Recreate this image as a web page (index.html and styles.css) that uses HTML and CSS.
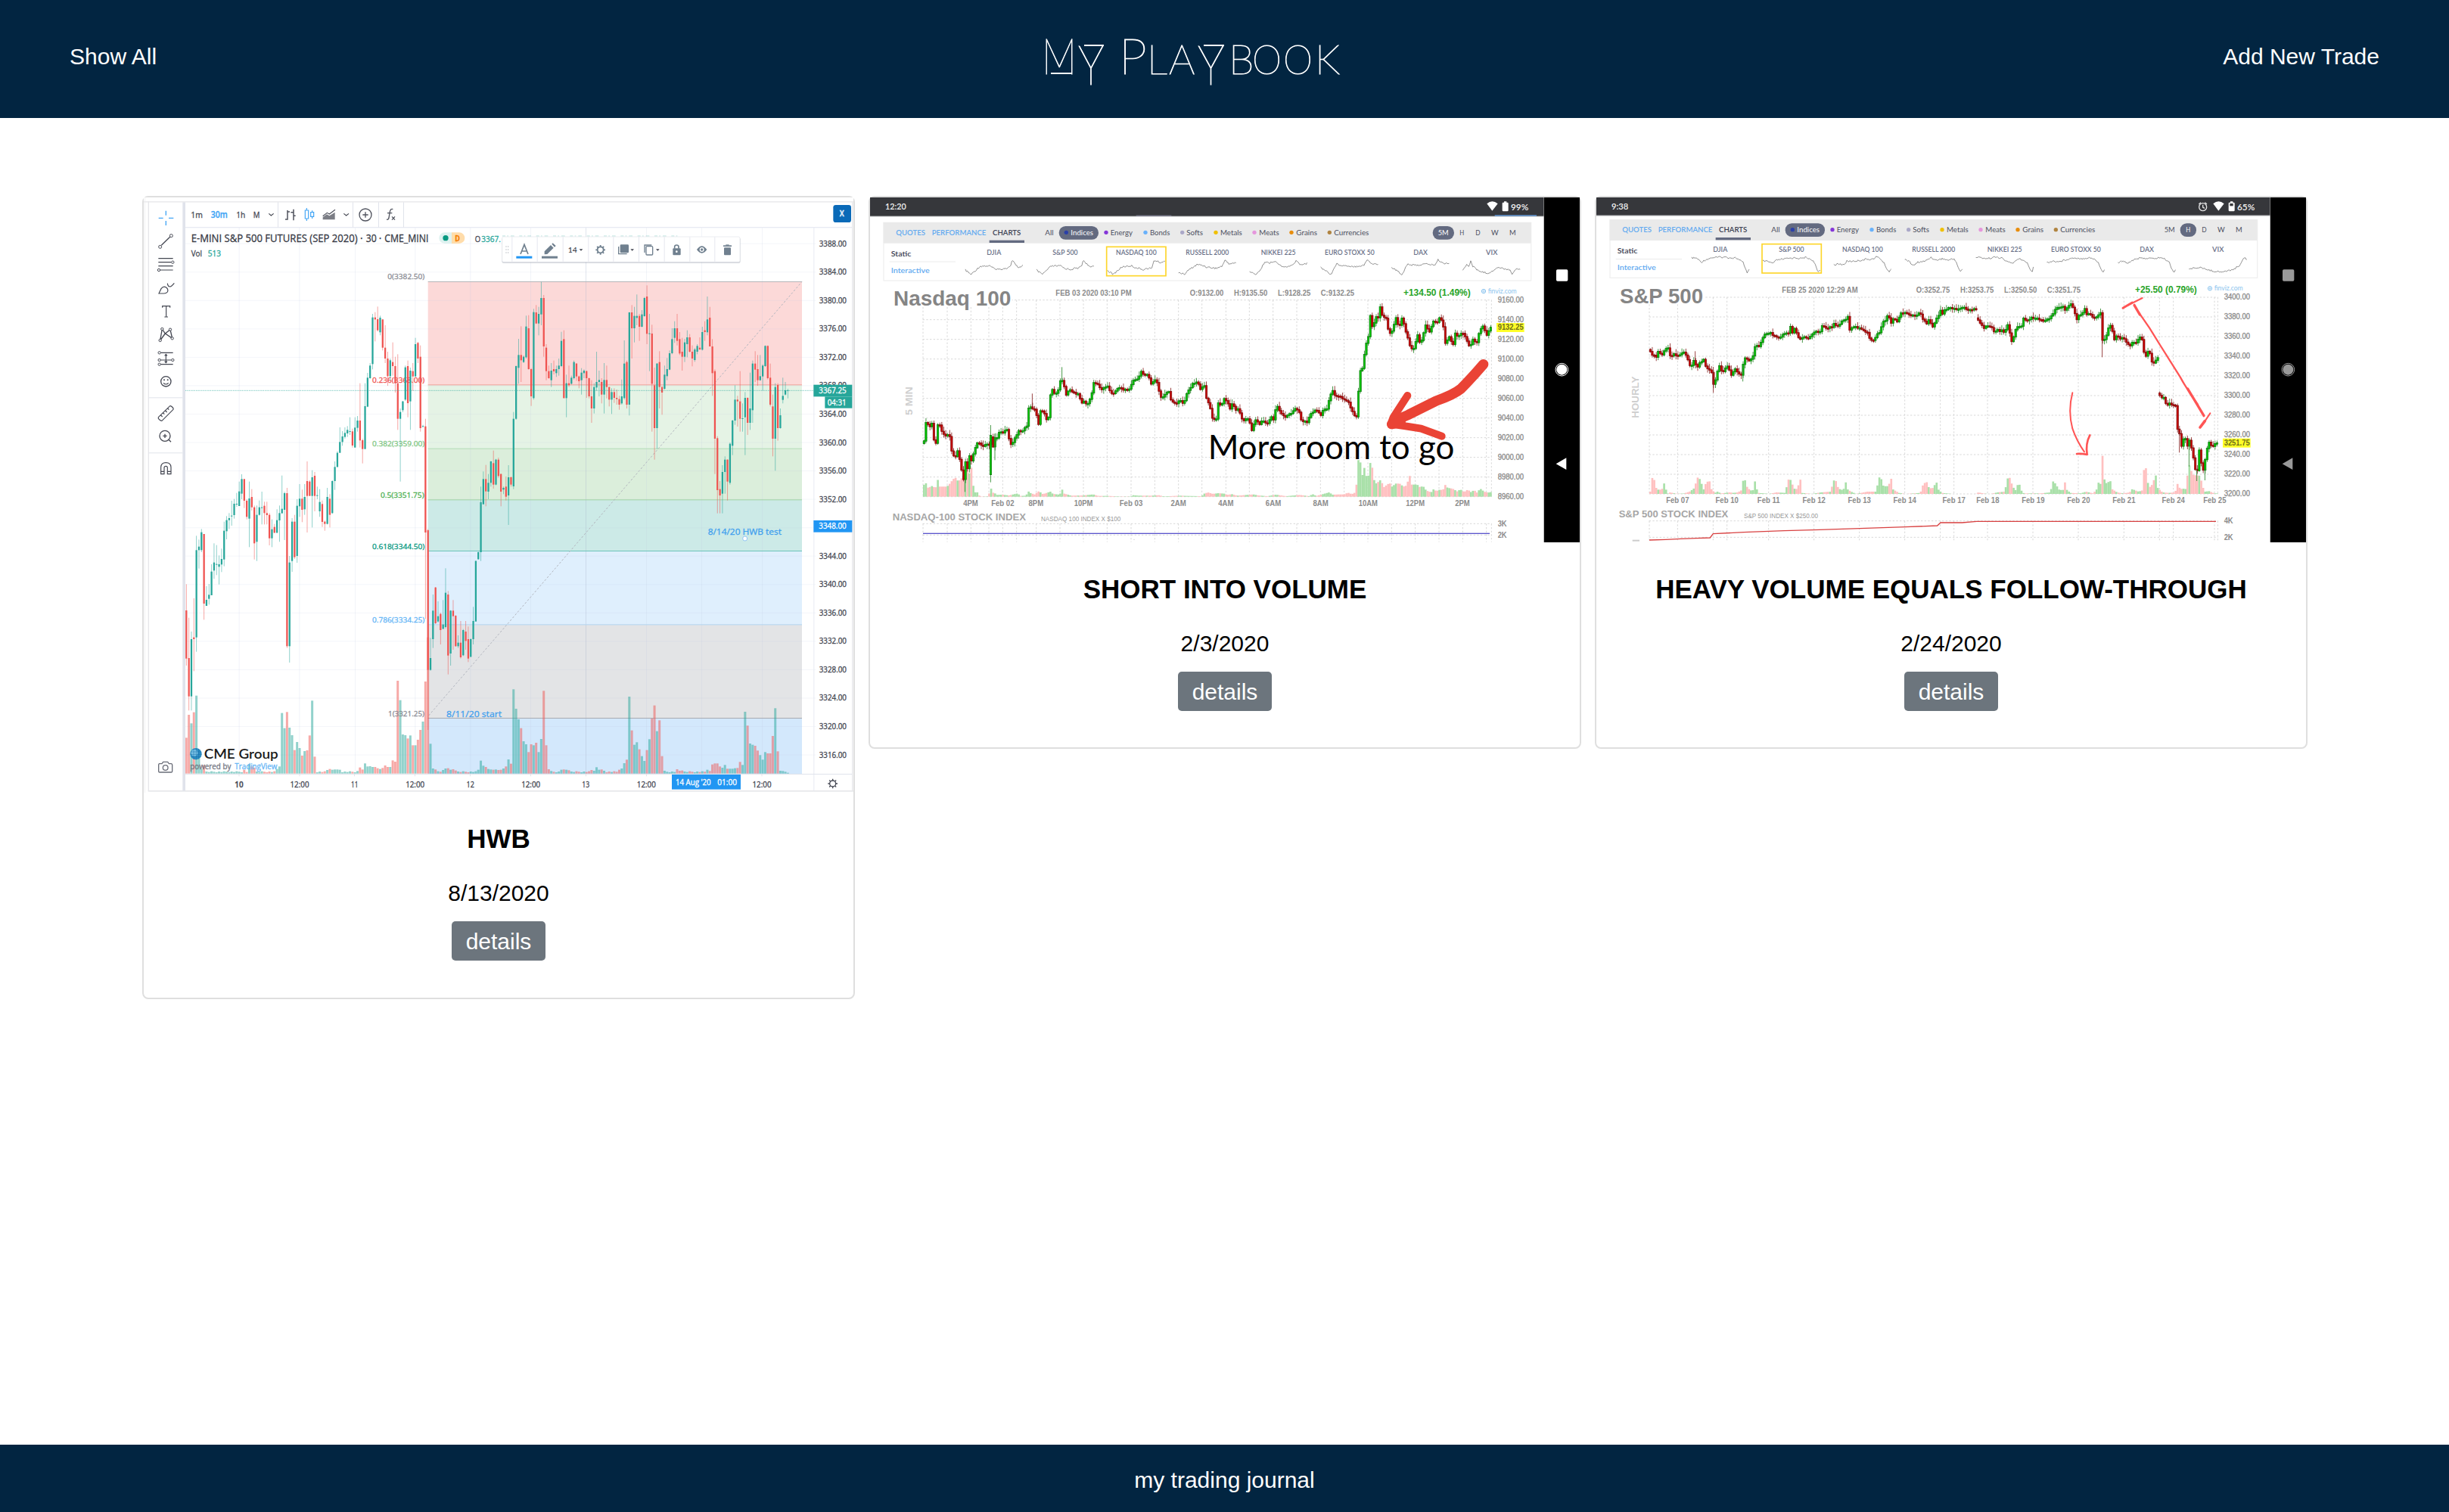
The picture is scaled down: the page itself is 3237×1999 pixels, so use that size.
FILE: index.html
```html
<!DOCTYPE html>
<html lang="en">
<head>
<meta charset="utf-8">
<title>My Playbook</title>
<link rel="stylesheet" href="styles.css">
</head>
<body>
<header class="navbar">
  <a class="nav-link">Show All</a>
  <svg class="logo" viewBox="0 0 396 80" role="img" aria-label="My Playbook">
    <g class="logo-text">
      <text y="62" font-size="66" x="2" textLength="46" lengthAdjust="spacingAndGlyphs">M</text>
      <text y="76" font-size="73" x="50" textLength="34" lengthAdjust="spacingAndGlyphs">Y</text>
      <text y="62" font-size="66" x="104">P</text>
      <text y="62" font-size="54" x="141 170">LA</text>
      <text y="76" font-size="73" x="208" textLength="35" lengthAdjust="spacingAndGlyphs">Y</text>
      <text y="62" font-size="54" x="249">B</text>
      <text y="62" font-size="54" x="280" textLength="39" lengthAdjust="spacingAndGlyphs">O</text>
      <text y="62" font-size="54" x="321" textLength="39" lengthAdjust="spacingAndGlyphs">O</text>
      <text y="62" font-size="54" x="363">K</text>
    </g>
    <path class="logo-rule" d="M14 61H41M58 24H84M216 24H243"/>
  </svg>
  <a class="nav-link">Add New Trade</a>
</header>
<main class="cards">
  <article class="card card-tall">
    <svg class="shot" id="hwb" viewBox="30 33 2814 2361"></svg>
    <div class="card-body">
      <h5 class="card-title">HWB</h5>
      <p class="card-date">8/13/2020</p>
      <a class="btn">details</a>
    </div>
  </article>
  <article class="card card-wide">
    <svg class="shot" id="nasdaq" viewBox="15 33 2814 1368"></svg>
    <div class="card-body">
      <h5 class="card-title">SHORT INTO VOLUME</h5>
      <p class="card-date">2/3/2020</p>
      <a class="btn">details</a>
    </div>
  </article>
  <article class="card card-wide">
    <svg class="shot" id="sp500" viewBox="15 33 2814 1368"></svg>
    <div class="card-body">
      <h5 class="card-title">HEAVY VOLUME EQUALS FOLLOW-THROUGH</h5>
      <p class="card-date">2/24/2020</p>
      <a class="btn">details</a>
    </div>
  </article>
</main>
<footer class="footer">my trading journal</footer>
<script src="charts.js"></script>
</body>
</html>
```
FILE: styles.css
```css
* { box-sizing: border-box; }
body {
  margin: 0;
  min-height: 100vh;
  display: flex;
  flex-direction: column;
  background: #fff;
  color: #000;
  font-family: "Liberation Sans", Arial, sans-serif;
  font-size: 30px;
  line-height: 45px;
}
.navbar {
  height: 156px;
  padding: 0 92px;
  display: flex;
  align-items: center;
  justify-content: space-between;
  background: #022541;
  color: #fff;
}
.nav-link { padding-bottom: 7px; }
.logo { width: 396px; height: 80px; margin-bottom: 4px; overflow: visible; }
.logo-text { font-family: Lato, sans-serif; font-weight: 100; fill: #fff; stroke: #fff; stroke-width: 1; }
.logo-rule { fill: none; stroke: #fff; stroke-width: 2; }
.cards {
  flex: 1;
  padding: 103px 187px 0 188px;
  display: flex;
  align-items: flex-start;
  gap: 18px;
}
.card {
  width: 942px;
  border: 2px solid #dfdfdf;
  border-radius: 8px;
  background: #fff;
}
.shot { display: block; width: 938px; height: auto; }
.card-body {
  padding: 40px 40px 48px;
  display: flex;
  flex-direction: column;
  align-items: center;
}
.card-tall .card-body { padding-bottom: 49px; }
.card-wide .card-body { padding-top: 41px; }
.card-title { margin: 0 0 28px; font-size: 35px; line-height: 42px; font-weight: 700; white-space: nowrap; }
.card-date { margin: 0 0 15px; }
.btn {
  width: 124px;
  height: 52px;
  display: flex;
  align-items: center;
  justify-content: center;
  border-radius: 5px;
  background: #6c757d;
  color: #fff;
}
.footer {
  height: 89px;
  padding-top: 24px;
  background: #022541;
  color: #fff;
  text-align: center;
}
.tv { font-family: "Open Sans", "Noto Sans", sans-serif; }
.lato { font-family: Lato, sans-serif; }
.arial { font-family: "Liberation Sans", Arial, sans-serif; }
```
FILE: charts.js
```js
// ---------- drawing helpers ----------
const esc = s => s.replace(/&/g, '&amp;');
const R = (x, y, w, h, f, extra = '') => `<rect x="${x}" y="${y}" width="${w}" height="${h}" fill="${f}" ${extra}/>`;
const P = (d, s, w = 4, extra = '') => `<path d="${d}" fill="none" stroke="${s}" stroke-width="${w}" ${extra}/>`;
const C = (x, y, r, f, s = 'none', w = 3) => `<circle cx="${x}" cy="${y}" r="${r}" fill="${f}" stroke="${s}" stroke-width="${w}"/>`;
const T = (cls, x, y, s, size, fill, len, weight = 400, extra = '') =>
  `<text class="${cls}" x="${x}" y="${y}" font-size="${size}" fill="${fill}" font-weight="${weight}" ${cls == 'tv' ? `stroke="${fill}" stroke-width=".9"` : ''} ${len ? `textLength="${len}" lengthAdjust="spacingAndGlyphs"` : ''} ${extra}>${esc(s)}</text>`;
const noise = i => { const j = Math.sin(i * 12.9898) * 43758.5453; return j - Math.floor(j); };

// ---------- HWB: S&P futures, 30 minute candles ----------
// direction, body top, body bottom, wick top, wick bottom
const lower = `r 501 692 397 720;r 690 842 530 898;g 615 842 585 898;r 608 615 453 742;g 262 608 205 665;g 248 262 220 335;g 191 262 178 270;r 198 474 198 538;g 459 483 405 483;g 439 455 396 478;g 347 441 318 441;g 311 343 235 376;g 317 319 242 361;g 318 328 283 398;g 297 319 256 349;g 185 299 149 326;g 143 187 127 219;g 135 143 115 178;g 125 127 66 165;g 78 123 59 137;g 78 80 35 90;g 29 87 -10 87;g -20 38 -39 60;r -20 66 -20 95;r 66 130 60 140;g 57 137 -10 250;r 51 92 20 105;r 92 235 85 299;g 122 229 85 305;g 92 122 65 125;g 92 94 30 160;r 86 115 70 160;r 115 123 70 160;r 122 215 115 243;g 179 215 140 250;r 170 193 158 195;g 143 193 100 195;g 115 144 85 229;g 98 116 -34 116;g 36 102 30 222;r 36 643 15 650;g 311 643 285 708;g 149 305 135 348;r 149 290 122 297;g 86 285 60 312;g 58 88 0 130;r 58 102 22 151;g 51 100 0 122;r -12 47 -90 192;r -10 47 -15 47;g -27 47 -55 172;r -33 47 -48 108;g 44 46 10 60;g 71 108 20 130;r 79 150 65 170;r 149 158 145 185;g 51 158 15 160;r 58 122 40 172;g -12 115 -15 118;g -68 -12 -90 23`;
const tuesday = `g 1046 1102 1040 1104;g 1003 1046 945 1046;g 981 1003 960 1018;g 967 983 945 990;g 955 969 940 983;g 960 962 905 975;r 961 1017 950 1025;g 946 1025 905 1025;g 918 947 900 962;r 918 997 770 1025;r 996 1031 990 1088;g 861 1031 770 1031;g 748 863 729 865;g 700 750 690 752;g 509 694 495 715;r 509 517 488 604;r 516 560 466 565;g 510 568 502 580;r 517 629 515 640;r 629 672 540 690;r 672 742 645 780;g 679 742 672 760;r 686 702 608 740;r 702 770 665 807;r 770 911 655 955;g 884 911 870 1160;g 842 877 840 885;g 707 835 700 840;r 702 849 680 905;g 720 842 708 955;r 722 743 690 800;g 615 743 590 745;r 610 672 606 690;r 665 948 620 962;g 940 942 935 945;r 941 1362 911 1705;r 1353 1907 1348 2145`;
const overnight = `g 690 737 610 740;g 502 615 438 650;r 410 552 408 555;g 524 545 465 550;r 515 579 510 636;g 557 574 460 576;g 431 567 334 572;r 438 680 424 755;g 502 672 500 720;r 502 524 460 657;r 522 643 520 645;g 629 643 600 650;r 629 687 543 692;g 579 679 575 682;r 585 622 543 657;r 615 692 565 706;g 615 685 612 687;g 543 615 487 636;g 305 545 303 545;g 270 298 268 300;g 72 270 10 305;g -20 80 -50 80;r -20 29 -76 88;g -5 30 -40 60;g -90 -5 -92 10`;
const upper = `r 1087 1172 1037 1188;g 1073 1172 1070 1175;r 1073 1138 1065 1145;r 1130 1200 1128 1258;g 1185 1192 1180 1210;r 1180 1220 1140 1235;g 1143 1215 1095 1332;r 1143 1172 1140 1180;g 911 1179 884 1190;g 702 911 700 915;g 658 709 594 772;r 658 679 544 765;g 665 686 660 690;g 545 667 502 672;r 552 714 500 716;r 714 822 710 860;g 488 829 475 835;r 489 533 460 535;g 495 533 467 580;g 432 497 368 540;r 432 624 420 665;r 629 722 615 758;r 722 750 700 752;g 720 758 690 785;r 714 723 680 735;g 714 730 700 745;g 700 714 672 740;g 602 702 566 706;r 595 829 560 830;g 770 829 736 905;r 770 778 700 785;g 748 772 740 775;g 686 750 680 755;r 692 743 690 760;r 743 762 740 790;g 728 758 710 815;g 720 730 715 750;r 722 750 720 828;r 750 822 748 830;r 822 870 758 927;g 785 870 770 890;g 765 787 645 800;g 757 765 720 822;r 765 815 750 850;g 757 815 690 890;r 757 785 700 830;r 785 835 784 862;g 805 835 790 892;r 805 828 790 848;r 828 833 795 855;r 833 855 820 875;g 822 850 755 855;g 692 829 600 835;r 686 855 680 870;g 489 855 488 898;r 489 552 460 672;g 503 552 467 608;g 503 511 418 540;r 503 546 495 602;g 497 546 480 548;g 432 504 428 506;r 426 574 382 615;g 572 574 495 722;r 573 772 538 962;r 778 948 708 1073;g 692 948 690 1030;r 686 785 643 870;r 785 807 780 895;g 736 792 700 795;g 714 742 670 758;g 651 716 640 718;g 595 651 552 655;g 552 590 524 610;r 552 602 495 620;r 595 652 567 658;r 645 665 590 720;g 608 665 594 686;g 588 615 560 667;r 588 645 575 648;r 645 672 620 703;g 636 678 630 685;g 622 645 615 655;r 629 636 588 638;g 567 637 546 640;r 560 567 524 602;g 517 568 426 580;r 510 624 467 624;r 624 730 595 820;r 722 990 715 1130;r 988 1194 980 1286;r 1190 1215 1158 1286;g 1122 1208 1095 1286;g 1073 1122 1060 1208;r 1073 1160 1072 1235;g 1010 1165 1005 1172;g 918 1018 915 1055;g 835 918 778 935;r 835 842 820 942;r 842 911 722 962;g 909 911 850 962;g 828 905 805 1055;r 828 927 826 975;g 870 927 728 955;g 692 877 680 927;r 692 716 643 765;r 714 758 658 780;g 742 758 658 760;g 700 743 695 800;g 622 702 620 705;r 622 750 620 755;r 748 855 692 862;r 862 990 815 1060;g 785 990 770 1117;r 777 948 770 998;g 897 948 870 950;g 820 836 748 850;g 798 815 765 818;g 798 800 792 830`;
const parse = (s, dy) => s.split(';').map(c => { const [k, ...v] = c.trim().split(' '); return [k, ...v.map(n => +n + dy)]; });
const candles = [...parse(lower, 1170), ...parse(tuesday, 0), ...parse(overnight, 1170), ...parse(upper, 0)];

// bar index -> top of the volume bar; the rest stay near the floor
const vol = {0:1006,1:915,2:949,3:905,4:839,5:1080,6:1130,7:1115,23:1133,25:1110,26:1120,27:1125,36:1130,37:1120,38:908,39:968,40:904,41:966,42:996,43:1055,44:1023,45:1047,46:1077,47:1059,48:1056,49:997,50:859,51:1081,56:1134,57:1130,58:1133,59:1132,60:1132,61:1133,68:1138,69:1124,70:1132,71:1108,72:1120,73:1119,74:1122,75:1122,76:1127,77:1130,78:1126,79:1116,80:1122,81:1122,82:1096,83:1101,84:780,85:857,86:993,87:996,88:1009,89:997,90:1036,91:1036,92:1014,93:975,94:942,95:783,96:608,97:1030,98:1128,99:1132,102:1134,103:1128,104:1127,105:1133,106:1131,107:1136,116:1133,117:1097,118:1117,119:1122,120:1130,121:1132,122:1133,123:1132,124:1134,125:1133,126:1128,127:1120,128:1092,129:1109,130:814,131:891,132:933,133:968,134:1020,135:1032,136:1063,137:1032,138:1036,139:1026,140:1063,141:1011,142:820,143:1036,144:1131,145:1138,149:1133,150:1132,151:1133,152:1135,161:1134,162:1137,163:1123,164:1133,165:1132,166:1137,172:1133,173:1128,174:1107,175:1093,176:843,177:977,178:1034,179:1024,180:1052,181:1079,182:1098,183:1055,184:1012,185:930,186:878,187:980,188:937,189:1079,190:1137,195:1131,196:1137,197:1136,207:1133,208:1138,209:1112,210:1108,211:1108,212:1120,213:1125,214:1114,215:1129,216:1129,217:1129,218:1127,219:1126,220:1102,221:1114,222:903,223:958,224:1029,225:1034,226:1038,227:1057,228:1075,229:1093,230:1063,231:1068,232:1068,233:999,234:889,235:1060,236:1137,237:1138,238:1141,239:1145};
const gear = (x, y, s, w) => C(x, y, 12, 'none', s, w) + P(Array.from({length: 8}, (_, i) => { const a = i * Math.PI / 4, c = Math.cos(a), n = Math.sin(a); return `M${x + 13 * c} ${y + 13 * n}L${x + 19 * c} ${y + 19 * n}`; }).join(''), s, w);

function drawHwb() {
  const tv = 'tv', ink = '#434651';
  let o = R(30, 33, 2814, 2364, '#fff');
  // fib retracement bands
  const bands = [[367, 776, '#fcd9d8', '#b5b5b8'], [776, 1029, '#e5f3e5', '#f39b95'], [1029, 1232, '#dbeedb', '#b5dcb8'], [1232, 1435, '#cceae7', '#9ed3a0'], [1435, 1727, '#dfeffd', '#6cc3ba'], [1727, 2098, '#e3e4e6', '#b0d4f3'], [2098, 2319, '#d3e8fc', '#a8aab0']];
  for (const [a, b, f] of bands) o += R(1157, a, 1483, b - a, f);
  // grid
  for (let i = 0; i < 19; i++) o += R(195, 215 + i * 112.65, 2500, 3, 'rgba(190,200,225,.17)');
  for (const x of [408, 647, 868, 1106, 1325, 1564, 1783, 2023, 2242, 2482]) o += R(x - 1, 152, 3, 2167, 'rgba(190,200,225,.2)');
  o += R(1782, 152, 3, 2167, 'rgba(150,160,185,.18)');
  // fib lines
  for (const [a, , , l] of bands) o += R(1157, a - 1, 1483, 3, l);
  o += P('M1160 2088L2640 367', '#b2b5be', 3, 'stroke-dasharray="8 7"');
  // volume
  candles.forEach(([k], i) => {
    const x = 199 + 9.98 * i, top = (vol[i] || 1139 + (i * 7) % 5) + 1170;
    o += R((x - 4.6).toFixed(1), top, 9, 2318 - top, k == 'g' ? '#26a69a' : '#ef5350', 'opacity=".5"');
  });
  o += T(tv, 997, 358, '0(3382.50)', 29, '#8c8e96', 147) + T(tv, 936, 768, '0.236(3368.00)', 29, '#ef5350', 208)
    + T(tv, 936, 1020, '0.382(3359.00)', 29, '#81c784', 208) + T(tv, 969, 1223, '0.5(3351.75)', 29, '#4caf50', 173)
    + T(tv, 936, 1428, '0.618(3344.50)', 29, '#089981', 208) + T(tv, 936, 1719, '0.786(3334.25)', 29, '#64b5f6', 208)
    + T(tv, 999, 2090, '1(3321.25)', 29, '#8c8e96', 144);
  // candles
  candles.forEach(([k, a, b, c, d], i) => {
    const x = 199 + 9.98 * i, f = k == 'g' ? '#26a69a' : '#ef5350';
    o += R((x - 1.4).toFixed(1), c, 2.8, d - c, f, 'opacity=".55"') + R((x - 3.4).toFixed(1), a, 6.8, Math.max(3, b - a), f);
  });
  o += P('M195 799H2690', '#26a69a', 3, 'stroke-dasharray="4 3" opacity=".6"');
  // frames
  o += R(30, 48, 2814, 5, '#ececee') + R(34, 33, 2, 2364, '#ececee') + R(47, 48, 4, 2340, '#e6e7ea') + R(47, 2385, 2797, 5, '#e6e7ea');
  o += R(184, 52, 11, 2334, '#e0e3eb') + R(195, 150, 2646, 4, '#e8eaf2') + R(2686, 152, 3, 2234, '#e8eaf2') + R(195, 2319, 2646, 3, '#e0e3eb');
  for (const x of [562, 859, 961, 1060]) o += R(x - 1, 52, 3, 100, '#e0e3eb');
  for (const y of [826, 1045]) o += R(50, y, 134, 3, '#e0e3eb');
  o += R(2838, 52, 4, 2334, '#e6e7ea');
  // top toolbar
  o += T(tv, 217, 113, '1m', 35, ink, 47) + T(tv, 296, 113, '30m', 35, '#42a5f5', 66, 600) + T(tv, 397, 113, '1h', 35, ink, 36) + T(tv, 464, 113, 'M', 35, ink, 26);
  o += P('M526 97l9 8 10-8M823 97l10 8 10-8', ink, 3.5);
  o += P('M600 84V122M591 120H600M600 90H609M624 80V124M613 92H624M624 106H632', '#50535e', 4.5);
  o += P('M670 84h13v33h-13zM676 75v9M676 117v9M692 92h12v17h-12zM698 85v7M698 109v8', '#42a5f5', 3.5);
  o += `<path d="M740 121V112L756 100L766 106L788 92V121Z" fill="#7b7d85"/>` + P('M740 107L757 94L766 99L789 82', '#50535e', 3.5);
  o += C(909, 102, 24, 'none', '#50535e', 4) + P('M909 91V113M898 102H920', '#50535e', 4);
  o += P('M1018 80Q1009 76 1006 90L1002 114Q1000 123 993 120M996 95H1015M1014 109L1026 122M1026 109L1014 122', '#50535e', 4);
  o += T(tv, 218, 210, 'E-MINI S&P 500 FUTURES (SEP 2020)', 41, '#373a45', 660) + T(tv, 888, 210, '·', 41, '#373a45', 0) + T(tv, 911, 210, '30', 41, '#373a45', 42) + T(tv, 962, 210, '·', 41, '#373a45', 0) + T(tv, 985, 210, 'CME_MINI', 41, '#373a45', 174);
  o += `<path d="M1223 172H1251V216H1223A22 22 0 0 1 1223 172Z" fill="#dff2f0"/><path d="M1251 172H1281A22 22 0 0 1 1281 216H1251Z" fill="#ffdcaa"/>` + C(1227, 194, 11, '#089981') + T(tv, 1264, 206, 'D', 32, '#f57c00', 20, 700);
  o += T(tv, 1343, 209, 'O', 32, ink, 22) + T(tv, 1369, 209, '3367.', 32, '#26a69a', 77) + T(tv, 218, 267, 'Vol', 32, ink, 43) + T(tv, 284, 267, '513', 32, '#26a69a', 52);
  // left tools
  o += P('M118 86V104M118 126V144M89 115H107M129 115H148', '#42a5f5', 4);
  o += P('M100 223L134 190', ink, 4) + C(139, 185, 6, '#fff', ink) + C(95, 229, 6, '#fff', ink);
  o += P('M88 275H146M88 290H138M88 305H146M96 321H146', ink, 3.5) + C(145, 290, 5, '#fff', ink) + C(90, 321, 5, '#fff', ink);
  o += P('M90 414L99 395Q108 383 119 390Q129 398 124 408Q119 414 110 414ZM124 374Q126 388 135 387Q140 386 151 373', ink, 3.5);
  o += P('M104 470V464H134V470M119 464V507M112 507H126', ink, 3.5);
  o += P('M95 600L103 555L115 573L135 557L143 592L115 573L95 600', ink, 4) + [[95, 600], [103, 555], [135, 557], [143, 592]].map(p => C(p[0], p[1], 5, '#fff', ink)).join('');
  o += P('M97 649H146M97 678H139M97 695H146M118 656V688M113 661L118 655L123 661M113 683L118 689L123 683', ink, 3.5) + C(92, 649, 5, '#fff', ink) + C(92, 678, 5, '#fff', ink) + C(145, 678, 5, '#fff', ink) + C(92, 695, 5, '#fff', ink);
  o += C(118, 763, 20, 'none', ink, 4) + C(111, 757, 3, ink) + C(125, 757, 3, ink) + P('M108 769Q118 779 128 769', ink, 3.5);
  o += P('M88 905L134 860Q138 858 147 869V874L102 919Q98 921 88 910ZM98 897L104 903M107 888L112 893M116 879L122 885M125 870L130 875', ink, 3.5);
  o += C(114, 979, 21, 'none', ink, 4) + P('M129 994L138 1003M106 979H122M114 971V987', ink, 4);
  o += P('M98 1130V1103Q99 1085 118 1085Q137 1085 138 1103V1130H124V1105Q124 1099 118 1099Q111 1099 111 1105V1130ZM98 1120H111M124 1120H138', ink, 3.5);
  o += P('M92 2279H102L107 2272H125L130 2279H139Q143 2280 143 2284V2309Q143 2313 139 2313H93Q89 2313 89 2309V2284Q89 2280 92 2279Z', '#6a6d78', 4) + C(116, 2295, 10, 'none', '#6a6d78', 4);
  // floating text toolbar
  o += `<g transform="translate(1410 0)">` + P('M42 186H740', '#26a69a', 2, 'stroke-dasharray="12 7 5 9 14 20" opacity=".5"') + R(40, 192, 946, 102, 'rgba(100,110,130,.28)', 'rx="7"') + R(41, 189, 943, 100, '#fff', 'rx="6" stroke="#e2e4ea" stroke-width="2"');
  for (const x of [79, 179, 281, 382, 481, 582, 683, 784, 883]) o += R(x, 190, 3, 99, '#e6e8ef');
  for (const y of [228, 240, 252]) o += C(57, y, 2, '#b0b3bb') + C(65, y, 2, '#b0b3bb');
  const g = '#70808f';
  o += P('M114 258L129 220L144 258M119 246H139', g, 5) + R(97, 266, 63, 9, '#2196f3') + R(198, 266, 63, 9, g);
  o += `<path d="M209 259V247L234 222L245 233L220 258ZM238 218L242 214L254 225L249 230Z" fill="${g}"/>`;
  o += T('lato', 302, 251, '14', 31, '#434651', 36, 600) + '<path d="M347 238h14l-7 7zM550 238h14l-7 7zM651 238h14l-7 7z" fill="#434651"/>';
  o += gear(431, 241, g, 5.5);
  o += R(509, 220, 34, 33, g, 'rx="4"') + P('M503 228V257H536', g, 4) + R(612, 227, 26, 34, 'none', `rx="3" stroke="${g}" stroke-width="4"`) + P('M606 252V222H634', g, 4);
  o += R(718, 235, 31, 27, g, 'rx="3"') + P('M725 236V229Q725 222 733 222Q741 222 741 229V236', g, 5) + C(733, 248, 4, '#fff');
  o += `<path d="M813 240Q833 212 853 240Q833 268 813 240Z" fill="${g}"/>` + C(833, 240, 9, '#fff') + C(833, 240, 5, g);
  o += R(921, 232, 27, 30, g, 'rx="3"') + R(918, 223, 33, 5, g) + R(928, 220, 13, 4, g);
  o += R(1354, 63, 71, 69, '#0a6ab8', 'rx="10"') + T(tv, 1379, 108, 'X', 32, '#e3f0fa', 18, 700);
  // price axis
  const axis = [[3388, 216], [3384, 329], [3380, 441], [3376, 554], [3372, 666], [3368, 779], [3364, 892], [3360, 1005], [3356, 1117], [3352, 1230], [3344, 1456], [3340, 1568], [3336, 1681], [3332, 1793], [3328, 1906], [3324, 2018], [3320, 2131], [3316, 2244]];
  for (const [p, y] of axis) o += T(tv, 1298, y + 11, p + '.00', 31, ink, 109);
  o += R(1276, 776, 153, 47, '#26a69a') + T(tv, 1297, 810, '3367.25', 31, '#fff', 109) + R(1321, 823, 108, 46, '#26a69a') + T(tv, 1331, 857, '04:31', 31, '#fff', 75);
  o += R(1276, 1314, 153, 47, '#2196f3') + T(tv, 1297, 1348, '3348.00', 31, '#fff', 109);
  // notes
  o += T(tv, 857, 1372, '8/14/20 HWB test', 35, '#3f9fee', 292) + C(1004, 1386, 9, '#fff', '#90c4f5', 3);
  o += `</g>` + T(tv, 1230, 2093, '8/11/20 start', 35, '#3f9fee', 219);
  // time axis
  const times = [[408, '10', 34, 600], [648, '12:00', 75], [866, '11', 28], [1106, '12:00', 75], [1325, '12', 31], [1565, '12:00', 75], [1783, '13', 30], [2023, '12:00', 75], [2481, '12:00', 75]];
  for (const [x, s, l, w] of times) o += T(tv, x - l / 2, 2373, s, 32, ink, l, w || 400) + R(x - 1, 2321, 2, 8, '#d5d8e0');
  o += R(2124, 2322, 273, 59, '#2196f3') + T(tv, 2139, 2364, "14 Aug '20", 32, '#fff', 140) + T(tv, 2305, 2364, '01:00', 32, '#fff', 77);
  o += gear(2762, 2358, ink, 4);
  // CME badge
  o += C(237, 2240, 23, '#2f8fc4') + C(231, 2236, 13, '#7cc4e6') + P('M216 2232H258M214 2242H260M218 2252H256M228 2219V2261M238 2217V2263M248 2220V2260', '#1b6fa8', 1.5);
  o += T('lato', 269, 2258, 'CME Group', 52, '#1b1b1b', 294, 600) + T(tv, 214, 2300, 'powered by', 31, '#72757f', 162) + T(tv, 391, 2300, 'TradingView', 31, '#64b5f6', 168);
  document.getElementById('hwb').innerHTML = o;
}

// ---------- finviz style charts ----------
const nums = s => s.trim().split(/\s+/).map(p => p.split(',').map(Number));
const at = (pts, x) => {
  if (x <= pts[0][0]) return pts[0][1];
  for (let i = 1; i < pts.length; i++) if (x <= pts[i][0]) {
    const [a, b] = pts[i - 1], [c, d] = pts[i];
    return b + (d - b) * (x - a) / (c - a || 1);
  }
  return pts[pts.length - 1][1];
};
const shift = (pts, dx, dy) => pts.map(([x, y]) => [x + dx, y + dy]);

function finviz(id, c) {
  const dy = c.dy, l = 'lato', a = 'arial', nav = '#4a4f60';
  let o = R(15, 33, 2814, 1368, '#fff');
  o += R(15, 33, 2673, 71 + dy / 3, '#36373b') + R(15, 103 + dy / 4, 2673, 3, '#77787c') + R(2686, 33, 2, 1368, '#999') + R(2688, 33, 141, 1368, '#000');
  o += T(l, 75, 82, c.clock, 34, '#f2f2f2', c.clock.length == 5 ? 83 : 67, 600);
  const bx = 1425;
  o += `<path d="M${bx + 1036} 58Q${bx + 1057} 40 ${bx + 1079} 58L${bx + 1057} 86Z" fill="#fff"/>`;
  o += `<path d="M${bx + 1097} 56q0-3 4-3h3v-4h10v4h3q4 0 4 3v28q0 4-4 4h-16q-4 0-4-4z" fill="#fff"/>`;
  if (c.alarm) o += R(bx + 1102, 57, 13, 10, '#36373b') + C(bx + 995, 71, 15, 'none', '#e6e6e6', 4) + P(`M${bx + 995} 62V72L${bx + 1002} 76M${bx + 979} 60L${bx + 987} 53M${bx + 1011} 60L${bx + 1003} 53`, '#e6e6e6', 4);
  o += T(l, bx + 1131, 83, c.battery, 34, '#f2f2f2', 70, 600);
  const k = c.navKeys;
  o += R(bx + 1311, 319, 46, 46, k, 'rx="5"') + C(bx + 1333, 716, 25, 'none', k, 3) + C(bx + 1333, 716, 21, k) + `<path d="M${bx + 1310} 1090L${bx + 1351} 1066V1113Z" fill="${k}"/>`;
  // category bar
  o += `<g transform="translate(0 ${dy})">`;
  o += R(69, 122, 2567, 230, '#fff', 'stroke="#f0f0f0" stroke-width="4"') + R(68, 121, 2568, 83, '#eaeaea');
  o += T(l, 118, 171, 'QUOTES', 30, '#64aaf0', 116, 600) + T(l, 260, 171, 'PERFORMANCE', 30, '#64aaf0', 215, 600) + T(l, 501, 171, 'CHARTS', 30, '#3c4152', 112, 600) + R(488, 192, 139, 10, '#636a80');
  o += T(l, 709, 171, 'All', 30, nav, 34) + R(764, 136, 157, 53, '#636a80', 'rx="26"') + C(793, 161, 8, '#2a3fa8') + T(l, 811, 171, 'Indices', 30, '#fff', 89);
  const cats = [[951, 968, 'Energy', 88, '#8436d8'], [1107, 1125, 'Bonds', 79, '#68b1fb'], [1253, 1270, 'Softs', 65, '#aba8c8'], [1386, 1404, 'Metals', 86, '#f0c000'], [1539, 1558, 'Meats', 79, '#e596dc'], [1686, 1705, 'Grains', 83, '#e88d0c'], [1837, 1855, 'Currencies', 138, '#b08440']];
  for (const [cx, x, s, w, f] of cats) o += C(cx, 161, 8, f) + T(l, x, 171, s, 30, nav, w);
  o += c.frame == '5M' ? R(2246, 136, 85, 53, '#636a80', 'rx="26"') : R(2330, 136, 64, 53, '#636a80', 'rx="26"');
  for (const [s, x, w] of [['5M', 2267, 42], ['H', 2353, 18], ['D', 2416, 19], ['W', 2478, 29], ['M', 2550, 26]]) o += T(l, x, 171, s, 30, s == c.frame ? '#fff' : nav, w);
  o += T(l, 98, 256, 'Static', 31, '#3c4152', 80, 600) + R(92, 276, 262, 2, '#e2e2e2') + T(l, 98, 322, 'Interactive', 31, '#64aaf0', 153, 600);
  const names = [['DJIA', 478, 57], ['S&P 500', 739, 100], ['NASDAQ 100', 990, 161], ['RUSSELL 2000', 1267, 171], ['NIKKEI 225', 1565, 138], ['EURO STOXX 50', 1818, 197], ['DAX', 2170, 56], ['VIX', 2457, 46]];
  names.forEach(([s, x, w], i) => {
    o += T(l, x, 250, s, 27, '#6a7188', w, 600);
    const pts = nums(c.sparks[i]); let d = '';
    for (let q = 0; q <= 57; q++) d += (q ? 'L' : 'M') + (393 + 281.7 * i + q * 4).toFixed(1) + ' ' + (at(pts, q * 4) + (noise(q + i * 60) - .5) * 7).toFixed(1);
    o += P(d, '#5a5a5a', 2);
  });
  o += R(c.active, 218, 235, 115, 'none', 'stroke="#fdd62c" stroke-width="5"');
  // chart header
  const gr = '#8c8c8c', top = 429;
  for (let i = 0; i < c.prices; i++) o += P(`M224 ${top + i * 780 / (c.prices - 1)}H2480`, '#d8d8d8', 3, 'stroke-dasharray="7 7"');
  for (const x of c.grid) o += P(`M${x} ${top}V1209M${x} ${c.sub[0]}V${1400 - dy}`, '#d8d8d8', 3, 'stroke-dasharray="7 7"');
  for (const y of c.sub) o += P(`M224 ${y}H2480`, '#d8d8d8', 3, 'stroke-dasharray="7 7"');
  o += R(106, 385, c.titleW + 6, 70, '#fff') + T(a, 108, 452, c.title, 82, '#858585', c.titleW, 700);
  o += T(a, 751, 412, c.date, 31, gr, 301, 700);
  c.ohlc.forEach((s, i) => o += T(a, [1283, 1458, 1632, 1802][i], 412, s, 31, gr, [134, 133, 130, 133][i], 700));
  o += T(a, c.chX, 412, c.change, 36, '#28a428', 2396 - c.chX, 700) + T(l, 2465, 403, 'finviz.com', 27, '#8cc4ee', 114) + C(2448, 394, 8, 'none', '#8cc4ee', 3) + P('M2442 394h12M2448 388v12', '#8cc4ee', 2);
  for (let i = 0; i < c.prices; i++) o += T(a, 2504, top + 10 + i * 780 / (c.prices - 1), (c.hi - 20 * i) + '.00', 30, gr, 103, 400, 'stroke="#8c8c8c" stroke-width="1"');
  for (const [x, s, w] of c.times) o += T(a, x - w / 2, 1246, s, 31, gr, w, 700);
  o += `<text class="arial" font-size="37" font-weight="700" fill="#cfcfcf" textLength="${c.sideW}" lengthAdjust="spacingAndGlyphs" transform="translate(184 ${c.sideY}) rotate(-90)">${c.side}</text>`;
  // price path and volume
  let prev = null, last = null, body = '', bars = '';
  for (let i = 0; i < 288; i++) {
    const x = 229 + i * 7.83;
    const seg = c.price.find(s => x >= s[0][0] - 4 && x <= s[s.length - 1][0] + 4);
    if (!seg) { last = null; continue; }
    const r = noise(i), y = at(seg, x) + (r - .5) * 7;
    if (seg !== last) prev = y + (id == 'sp500' ? -8 : 10);
    last = seg;
    const up = y < prev, t = Math.min(y, prev), h = Math.max(4, Math.abs(y - prev));
    const wk = 5 + r * 14, wk2 = 4 + ((r * 7) % 1) * 12;
    const v = at(c.volume, x);
    if (v < 1208.5) bars += R((x - 4).toFixed(1), v.toFixed(1), 8, (1209 - v).toFixed(1), up ? '#a9e0a9' : '#ffc0c0');
    body += R((x - 1.3).toFixed(1), (t - wk).toFixed(1), 2.6, (h + wk + wk2).toFixed(1), up ? '#2f8a2f' : '#8c2a2a')
      + R((x - 3.5).toFixed(1), (t - 1).toFixed(1), 7, (h + 2).toFixed(1), up ? '#00c800' : '#c80000', `stroke="${up ? '#087008' : '#780808'}" stroke-width="2"`);
    prev = y;
  }
  for (const [x, y1, y2, f] of c.wicks) body += R(x - 1.3, y1, 2.6, y2 - y1, f);
  o += bars + body + (c.spike || '');
  o += R(2499, c.lastY - 18, 110, 36, '#ffff28') + T(a, 2504, c.lastY + 10, c.last, 30, '#6e6e1a', 102, 700);
  // lower index strip
  o += T(a, 104, c.idxY, c.idx, 39, '#a6a6a6', c.idxW, 700) + T(a, c.smallX, c.idxY + 1, c.small, 26, '#999', c.smallW);
  c.subLabels.forEach((s, i) => o += T(a, 2504, c.sub[i] + 10, s, 30, gr, 36, 700));
  o += c.strip + '</g>' + c.notes;
  document.getElementById(id).innerHTML = o;
}

const nPrice = [
  ...shift(nums('226,328 234,287 236,232 250,255 262,238 270,325 281,310 285,222 297,268 318,290 330,282 338,345 350,378 365,342 373,405 388,470 393,390 402,420 411,355 418,397 428,345 443,315 460,330 475,320 486,328 499,282 503,332 512,288 520,295 530,265 540,280 556,255 565,300 575,325 590,297 608,265 615,278 637,247 643,180 652,175 670,185 683,245 692,185 705,200 718,230 728,205 730,130 738,108 750,125 760,115 768,72 780,70 786,98 794,135 804,105 825,120 845,125 850,162 862,150 875,170 890,140 897,108 902,78 918,85 935,105 960,88 968,118 985,118 1002,97 1040,112 1055,72 1075,62 1090,35 1105,50 1118,48 1130,85 1148,60 1160,105 1170,142 1185,120 1200,117 1210,152 1225,162 1245,148 1258,160 1275,112 1295,82 1312,72 1325,105 1340,83 1350,145 1365,180 1373,220 1390,222 1395,158 1410,168 1420,142'), 0, 679),
  ...shift(nums('5,150 18,180 27,155 40,190 52,180 65,222 75,235 83,215 95,235 105,270 113,235 122,222 137,250 145,222 165,242 180,213 193,230 198,180 207,172 220,200 240,215 258,200 275,180 292,195 300,230 322,235 335,205 350,190 365,188 378,210 388,182 400,185 410,145 424,105 435,130 455,135 475,145 490,160 505,200 520,215 527,105 533,32 545,20 550,-35 560,-90 570,-115 573,-188 582,-142 598,-185 608,-180 613,-225 622,-185 638,-175 645,-130 655,-110 665,-145 675,-180 688,-140 700,-182 712,-130 722,-100 732,-65 745,-55 762,-115 770,-78 782,-100 792,-155 808,-125 825,-165 838,-160 850,-180 862,-160 870,-80 890,-105 900,-60 910,-120 922,-100 932,-118 945,-115 958,-85 968,-62 980,-95 995,-75 1008,-130 1020,-145 1035,-112 1050,-140'), 1425, 679)];
const nVol = [
  ...shift(nums('226,486 236,475 245,495 262,487 275,497 283,460 290,490 320,490 330,480 345,460 355,455 365,470 385,450 393,460 402,420 408,445 415,395 423,478 430,513 440,512 447,525 455,529 485,529 493,490 500,515 508,513 515,523 540,522 565,525 600,517 612,527 634,526 642,508 650,515 670,522 680,508 690,512 700,520 730,510 740,519 768,522 775,498 785,518 800,522 812,526 860,525 900,521 920,527 960,527 1000,529 1050,529 1058,524 1080,526 1130,526 1160,524 1180,529 1200,528 1245,526 1270,527 1330,528 1340,518 1355,513 1375,519 1395,516 1420,518'), 0, 679),
  ...shift(nums('5,523 25,520 45,526 110,521 130,525 165,528 200,522 240,528 295,523 330,528 345,520 360,527 410,513 425,522 450,521 470,521 485,514 500,520 517,512 525,378 533,382 541,450 549,411 557,447 565,453 572,394 580,405 588,462 600,482 610,461 620,475 628,492 650,475 660,490 675,478 690,478 705,490 720,485 728,435 736,482 760,482 770,492 783,488 795,505 815,513 825,500 835,508 850,502 862,504 870,482 880,495 900,498 920,510 930,500 945,512 960,502 975,513 985,502 995,515 1010,498 1025,510 1040,514 1050,512'), 1425, 679)];
const riseA = '0,310 10,318 22,328 40,312 58,295 75,294 98,294 110,303 135,308 155,303 170,302 180,290 186,270 200,292 212,300 228,292';
finviz('nasdaq', {
  dy: 11, clock: '12:20', battery: '99%', navKeys: '#fff', frame: '5M', active: 953,
  sparks: [riseA, riseA.replace('200,292', '200,286'), '0,312 12,320 22,328 45,308 60,297 95,293 110,300 140,308 165,303 176,304 184,272 192,274 210,280 228,276', '0,318 22,328 40,310 60,297 75,288 98,292 110,298 150,303 172,295 186,270 200,285 228,282', '0,315 22,328 45,308 60,276 80,284 95,274 115,286 130,298 160,296 175,288 184,272 200,288 228,284', '0,300 20,312 42,328 55,300 62,286 90,292 140,296 172,290 184,270 205,286 228,286', '0,300 20,312 42,328 55,300 62,286 90,292 140,286 172,290 184,270 205,284 228,282', '0,312 15,290 25,296 32,270 40,295 60,312 95,322 115,318 135,300 160,304 185,308 196,326 210,304 228,306'],
  title: 'Nasdaq 100', titleW: 466, date: 'FEB 03 2020 03:10 PM', ohlc: ['O:9132.00', 'H:9135.50', 'L:9128.25', 'C:9132.25'],
  chX: 2130, change: '+134.50 (1.49%)', prices: 11, hi: 9160,
  grid: [225, 321, 415, 486, 541, 596, 674, 768, 861, 955, 1050, 1144, 1238, 1331, 1426, 1519, 1613, 1707, 1801, 1895, 1989, 2083, 2177, 2271, 2365, 2459, 2479],
  times: [[414, '4PM', 59], [541, 'Feb 02', 91], [673, '8PM', 59], [861, '10PM', 74], [1050, 'Feb 03', 92], [1238, '2AM', 61], [1426, '4AM', 61], [1614, '6AM', 61], [1802, '8AM', 61], [1990, '10AM', 76], [2177, '12PM', 74], [2364, '2PM', 59]],
  side: '5 MIN', sideW: 113, sideY: 886, price: [nPrice], volume: nVol,
  wicks: [[776, 695, 750, '#2f8a2f'], [658, 800, 860, '#8c2a2a'], [493, 925, 1152, '#2f8a2f'], [391, 1140, 1190, '#2f8a2f'], [510, 960, 1064, '#2f8a2f']],
  spike: R(490, 965, 7, 157, '#00c800', 'stroke="#087008" stroke-width="2"'),
  last: '9132.25', lastY: 538, sub: [1316, 1361], subLabels: ['3K', '2K'],
  idx: 'NASDAQ-100 STOCK INDEX', idxY: 1304, idxW: 529, small: 'NASDAQ 100 INDEX X $100', smallX: 693, smallW: 316,
  strip: R(225, 1353, 2247, 4, '#5b55cc'),
  notes: R(1070, 104, 140, 3, '#8c8ca4') + R(2492, 103, 166, 4, '#6aa6ea')
    + '<g fill="none" stroke="#ea4335" stroke-linecap="round" stroke-linejoin="round"><path stroke-width="40" d="M2447 695Q2400 750 2358 792Q2330 815 2260 840Q2190 875 2150 895Q2100 915 2085 932"/><path stroke-width="30" d="M2146 819L2090 905L2080 932Q2140 940 2200 950L2282 980"/><path stroke-width="38" d="M2083 933L2120 925"/></g>'
    + '<path d="M1060 1390h4" stroke="#ccc" stroke-width="3"/>'
    + `<text class="lato" x="1355" y="1070" font-size="132" fill="#000" stroke="#fff" stroke-width="7" stroke-linejoin="round" paint-order="stroke" textLength="977" lengthAdjust="spacingAndGlyphs">More room to go</text>`
});

const s1a = nums('226,645 236,655 252,668 260,645 275,658 290,635 303,628 308,662 325,655 345,660 358,642 372,660 380,685 390,707 402,678 415,712 425,690 442,678 450,712 470,715 480,778 492,745 500,695 515,725 535,700 550,735 565,715 590,740 597,695 605,672 625,685 638,655 645,620 660,622 672,600 680,578 708,572 725,588 740,592 752,580 765,572 778,572 785,545 792,575 800,555 822,600 835,585 850,595 870,580 880,568 905,565 910,543 930,550 950,548 958,530 970,545 985,528 1002,520 1015,503 1020,558 1042,545 1060,552 1080,562 1092,572 1102,602 1115,603 1128,575 1140,568 1148,530 1160,520 1172,498 1185,530 1195,512 1205,530 1218,505 1225,490 1245,492 1275,505 1300,490 1312,520 1325,535 1332,515 1352,550 1362,515 1375,495 1380,478 1388,495 1398,475 1432,473');
const s1 = [...s1a, ...shift(nums('15,475 50,470 70,482 94,475'), 1425, 0)];
const s2 = shift(nums('102,515 115,535 128,552 145,540 160,548 168,570 180,555 188,572 195,550 205,570 223,535 235,603 243,600 248,570 262,540 275,548 283,515 300,522 320,508 345,515 360,525 385,515 400,495 410,475 428,465 440,465 450,485 462,462 475,450 485,490 497,518 505,500 520,490 528,470 535,500 548,492 560,512 575,510 588,488 594,488 597,600 610,590 620,550 630,540 645,600 655,578 665,595 680,588 695,612 710,628 718,595 725,618 740,590 750,585 758,610 762,650 770,665 778,640 790,665 795,695 805,680 815,670'), 1425, 0);
const s3 = shift(nums('822,795 825,830 842,825 850,865 862,845 878,858 885,850 890,885 895,960 903,970 912,1030 920,980 930,1000 936,1030 943,990 950,1030 958,1070 965,1112 975,1115 980,1040 984,1018 990,1110 1002,1120 1005,1060 1012,1030 1022,1000 1030,1025 1042,1010 1052,1008'), 1425, 0);
const sVol = [...nums('230,1200 236,1145 246,1155 254,1192 275,1192 283,1165 291,1190 297,1209 308,1203 330,1208 360,1208 385,1200 405,1185 415,1143 425,1150 433,1170 440,1192 450,1165 463,1155 470,1188 485,1205 495,1200 510,1207 545,1203 560,1205 575,1203 590,1195 597,1157 605,1155 613,1182 625,1195 636,1195 643,1155 650,1187 658,1205 700,1209 730,1203 765,1205 775,1152 788,1154 797,1188 813,1190 823,1143 830,1205 870,1209 905,1203 945,1200 955,1155 965,1158 975,1188 995,1195 1003,1158 1010,1190 1025,1200 1045,1209 1090,1200 1125,1200 1135,1145 1143,1140 1150,1175 1165,1180 1175,1175 1183,1140 1190,1190 1215,1205 1240,1209 1300,1205 1312,1168 1325,1162 1335,1187 1352,1185 1363,1158 1370,1190 1385,1205 1425,1209'),
  ...shift(nums('95,1209 105,1203 130,1208 155,1209 180,1203 210,1200 220,1148 230,1145 240,1178 252,1195 265,1162 275,1195 285,1207 350,1207 390,1203 402,1157 410,1168 425,1192 440,1195 448,1162 455,1192 470,1205 510,1207 532,1200 560,1207 575,1190 582,1162 590,1170 597,1057 604,1150 615,1170 627,1152 635,1190 655,1203 680,1207 705,1203 715,1190 740,1200 755,1195 762,1108 770,1107 777,1165 787,1185 797,1165 808,1133 816,1185 835,1203 860,1205 885,1203 895,1168 905,1190 915,1188 930,1190 937,1090 945,1100 953,1132 965,1135 985,1137 992,1175 1003,1200 1020,1198 1040,1207'), 1425, 0)];
finviz('sp500', {
  dy: 0, clock: '9:38', battery: '65%', alarm: true, navKeys: '#999', frame: 'H', active: 672,
  sparks: ['0,273 20,274 38,290 55,280 80,272 110,270 135,270 160,273 175,272 190,282 205,292 214,318 220,330 228,320', '0,285 20,288 40,294 55,282 80,278 110,274 130,272 150,276 170,271 195,280 205,292 214,318 220,328 228,320', '0,300 20,298 40,300 52,286 80,286 110,282 130,278 155,278 170,268 185,276 200,295 212,318 220,328 228,318', '0,276 15,286 35,304 52,290 80,286 105,270 120,282 150,276 170,282 195,276 205,290 214,318 222,328 228,318', '0,270 25,272 45,276 70,270 100,272 120,286 145,294 160,284 175,276 195,288 205,292 215,318 222,330 228,312', '0,292 25,286 50,288 80,278 110,272 140,276 170,271 190,280 205,292 214,318 222,330 228,318', '0,292 15,286 40,292 70,276 110,274 140,276 170,271 190,280 205,292 214,318 222,330 228,318', '0,318 35,310 70,318 90,324 120,328 150,326 180,316 200,304 212,280 222,268 228,280'],
  title: 'S&P 500', titleW: 330, date: 'FEB 25 2020 12:29 AM', ohlc: ['O:3252.75', 'H:3253.75', 'L:3250.50', 'C:3251.75'],
  chX: 2151, change: '+25.50 (0.79%)', prices: 11, hi: 3400,
  grid: [225, 337, 478, 533, 698, 878, 1058, 1238, 1379, 1433, 1566, 1746, 1926, 2107, 2248, 2303, 2466, 2479],
  times: [[337, 'Feb 07', 91], [533, 'Feb 10', 91], [698, 'Feb 11', 89], [878, 'Feb 12', 91], [1058, 'Feb 13', 91], [1238, 'Feb 14', 91], [1433, 'Feb 17', 91], [1567, 'Feb 18', 91], [1747, 'Feb 19', 91], [1927, 'Feb 20', 91], [2107, 'Feb 21', 91], [2303, 'Feb 24', 91], [2467, 'Feb 25', 91]],
  side: 'HOURLY', sideW: 165, sideY: 908, price: [s1, s2, s3], volume: sVol,
  wicks: [[479, 705, 808, '#8c2a2a'], [407, 643, 690, '#8c2a2a'], [2021, 600, 667, '#8c2a2a'], [596, 700, 763, '#2f8a2f'], [2396, 1110, 1158, '#2f8a2f'], [2428, 1110, 1155, '#2f8a2f'], [2365, 1000, 1100, '#2f8a2f'], [2327, 960, 1045, '#8c2a2a']],
  last: '3251.75', lastY: 1007, sub: [1316, 1381], subLabels: ['4K', '2K'],
  idx: 'S&P 500 STOCK INDEX', idxY: 1303, idxW: 434, small: 'S&P 500 INDEX X $250.00', smallX: 600, smallW: 294,
  strip: P('M225 1392L290 1390L350 1387L410 1385L466 1383L478 1367L600 1361L760 1355L900 1351L1060 1346L1240 1340L1367 1335L1380 1323H1465L1523 1318H2472', '#d84040', 4),
  notes: R(158, 1391, 28, 6, '#ccc') + '<g fill="none" stroke="#ff5555" stroke-linecap="round" stroke-linejoin="round"><path stroke-width="9" d="M2103 472L2140 450"/><path stroke-width="6" d="M2120 462L2180 432"/><path stroke-width="10" d="M2148 460L2170 498"/><path stroke-width="7" d="M2165 488Q2210 550 2250 618L2330 745Q2360 800 2400 855"/><path stroke-width="10" d="M2360 792L2424 899"/><path stroke-width="6" d="M2449 889L2425 925"/><path stroke-width="11" d="M2409 945L2428 920"/><path stroke-width="6" d="M1903 808Q1884 880 1903 950Q1920 1000 1950 1042"/><path stroke-width="8" d="M1972 976Q1954 1010 1961 1053Q1940 1048 1920 1050"/></g>'
});
drawHwb();
```
